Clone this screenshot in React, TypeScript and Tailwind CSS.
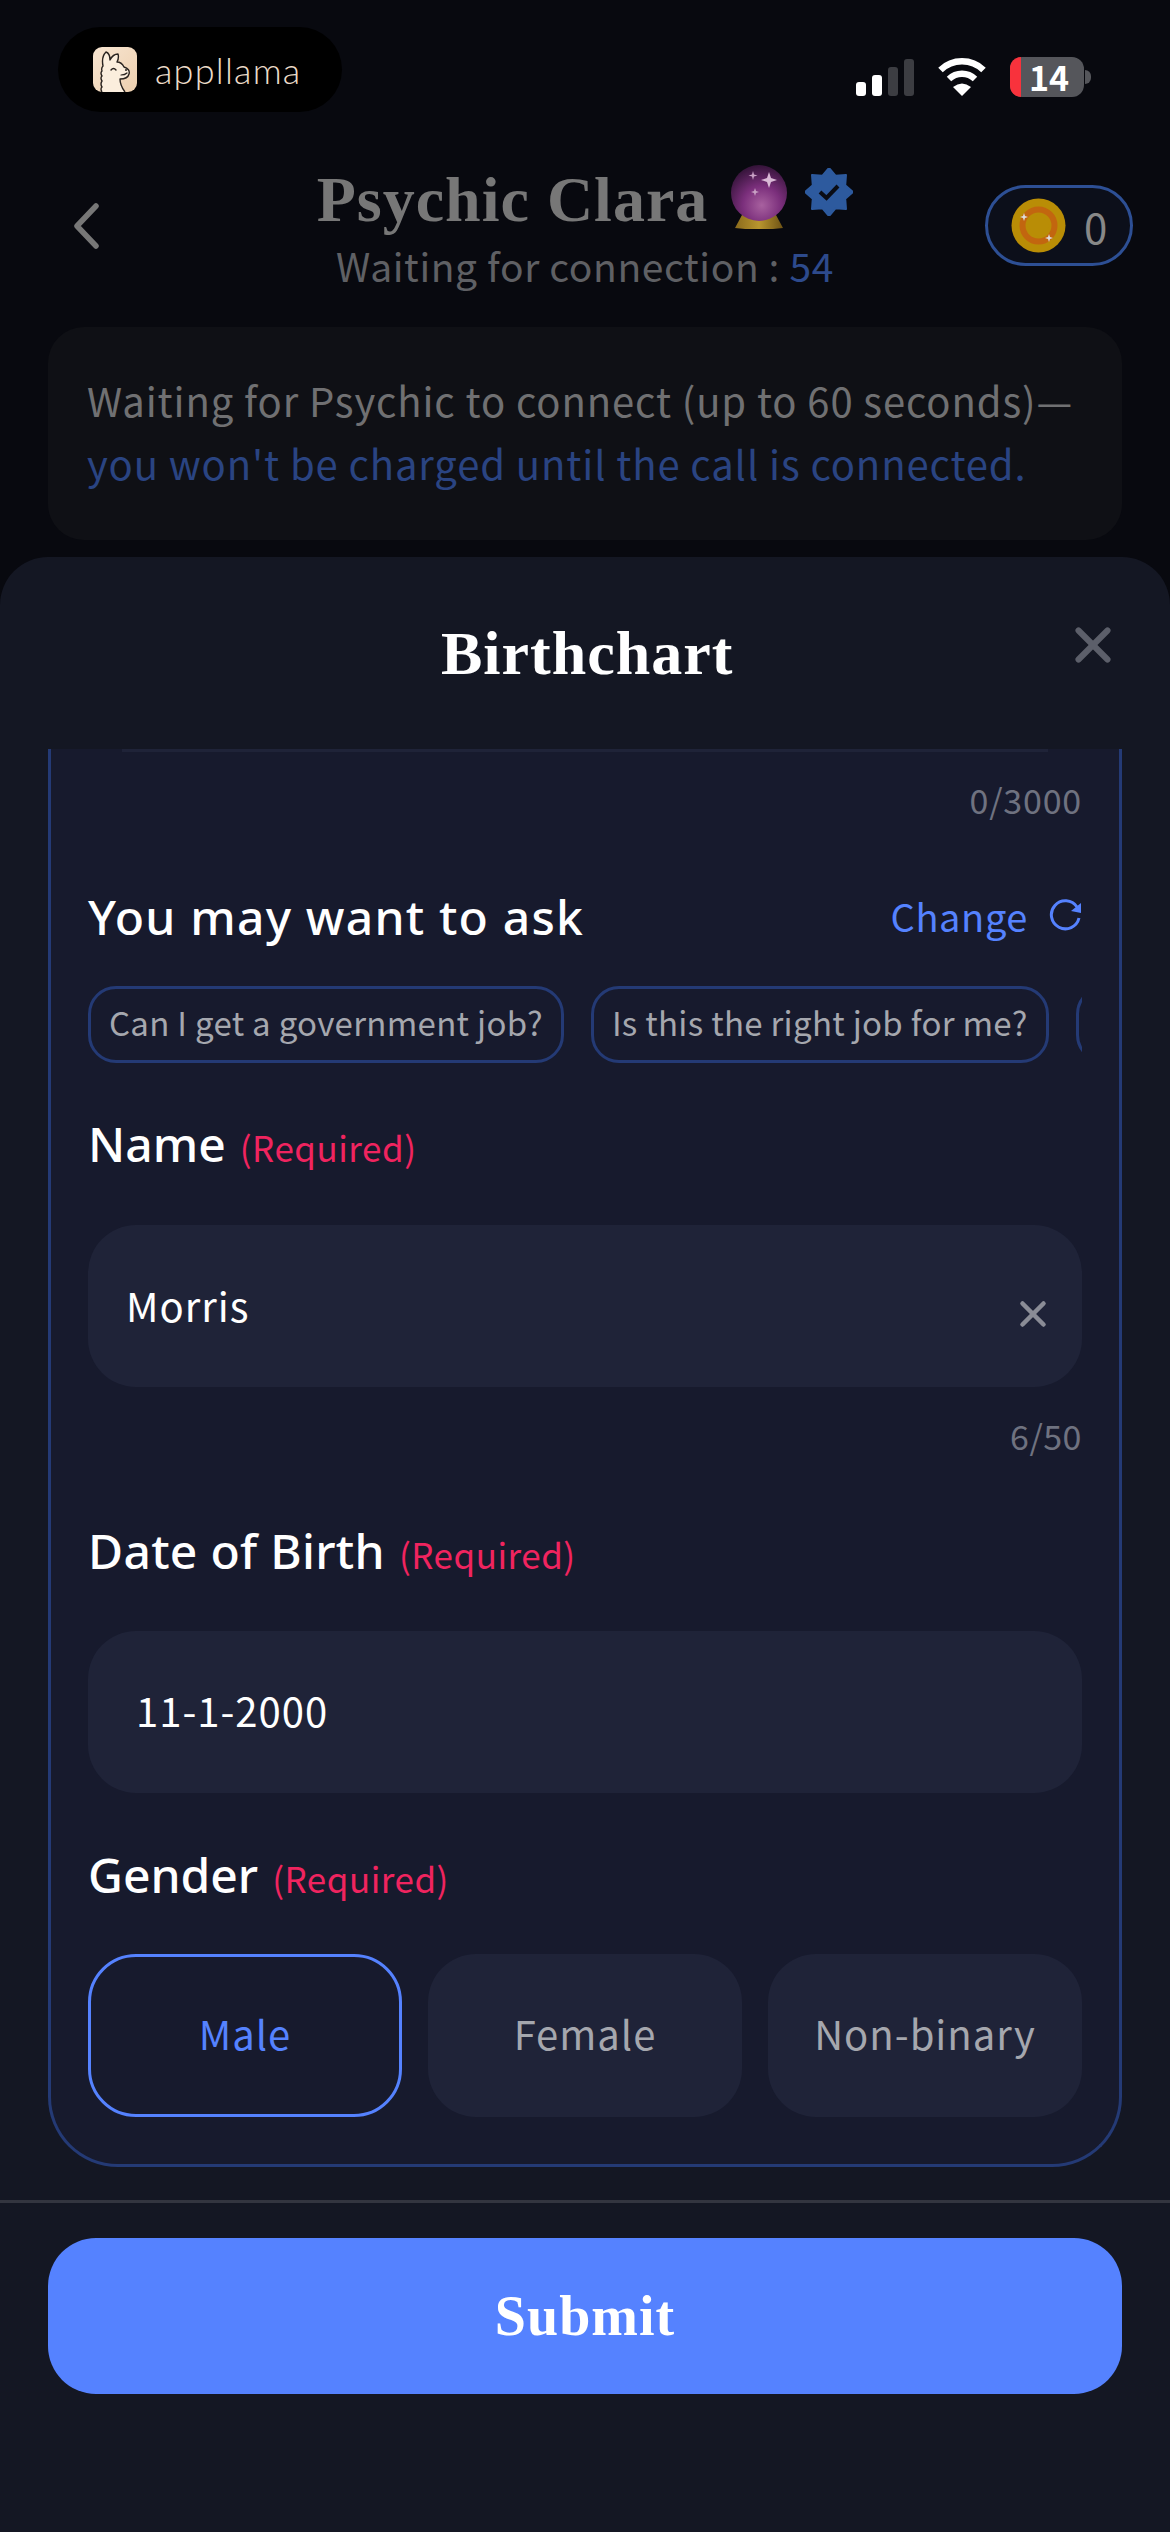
import { X } from "lucide-react";

const serif = "font-['Liberation_Serif',serif]";

function Required() {
  return <span className="text-[35px] tracking-[0.5px] text-[#f0245f]">(Required)</span>;
}

function LlamaIcon() {
  return (
    <svg width="44" height="45" viewBox="0 0 44 45">
      <defs>
        <linearGradient id="cream" x1="0" y1="0" x2="1" y2="1">
          <stop offset="0" stopColor="#f8e6d2" />
          <stop offset="1" stopColor="#edcfae" />
        </linearGradient>
      </defs>
      <rect width="44" height="45" rx="9" fill="url(#cream)" />
      <path
        d="M9 45 q-2 -3 0 -5 q-2 -3 0 -6 q-2 -3 0 -5 q-2 -3 0 -5 q-1 -3 1 -5 C9 14 10 8 13 5 C16 6 17 10 17 13 C19 9 22 7 25 7 C26 10 25 13 24 15 C28 15 30 18 31 20 C35 21 37 24 36 27 C35 31 31 32 27 32 C27 37 29 41 32 45"
        fill="#fbeedd"
        stroke="#2a2420"
        strokeWidth="1.4"
        strokeLinejoin="round"
      />
      <path d="M18 23 q2.5 -3 5 0" fill="none" stroke="#2a2420" strokeWidth="1.4" strokeLinecap="round" />
      <path d="M28 28 q4 0 6 -2" fill="none" stroke="#2a2420" strokeWidth="1.2" strokeLinecap="round" />
      <circle cx="33" cy="23" r="1" fill="#2a2420" />
    </svg>
  );
}

function Wifi() {
  return (
    <svg width="50" height="38" viewBox="0 0 50 38">
      <path d="M3.5 12 A31 31 0 0 1 46.5 12" fill="none" stroke="#fff" strokeWidth="6.5" />
      <path d="M12 21 A19 19 0 0 1 38 21" fill="none" stroke="#fff" strokeWidth="6.5" />
      <path d="M25 38 L16 29 Q25 22 34 29 Z" fill="#fff" />
    </svg>
  );
}

function CrystalBall() {
  return (
    <svg width="56" height="64" viewBox="0 0 56 64">
      <defs>
        <radialGradient id="ball" cx="0.55" cy="0.72" r="0.75">
          <stop offset="0" stopColor="#a8619f" />
          <stop offset="0.45" stopColor="#7b2f7c" />
          <stop offset="1" stopColor="#2e1133" />
        </radialGradient>
        <linearGradient id="base" x1="0" y1="0" x2="1" y2="0">
          <stop offset="0" stopColor="#8a6a1c" />
          <stop offset="0.5" stopColor="#b8962e" />
          <stop offset="1" stopColor="#6d5215" />
        </linearGradient>
      </defs>
      <path d="M11 50 L45 50 L52 63 Q28 66 4 63 Z" fill="url(#base)" />
      <circle cx="28" cy="28" r="28" fill="url(#ball)" />
      <path d="M38 7 l2 6 6 2 -6 2 -2 6 -2 -6 -6 -2 6 -2 Z" fill="#d9b9d6" />
      <path d="M22 6 l1 3.5 3.5 1 -3.5 1 -1 3.5 -1 -3.5 -3.5 -1 3.5 -1 Z" fill="#c8a0c4" />
      <path d="M24 23 l1 3 3 1 -3 1 -1 3 -1 -3 -3 -1 3 -1 Z" fill="#c8a0c4" />
    </svg>
  );
}

function VerifiedBadge() {
  const n = 8;
  const pts = Array.from({ length: n * 2 }, (_, i) => {
    const r = i % 2 === 0 ? 24 : 17.5;
    const a = (i * Math.PI) / n - Math.PI / 2;
    return `${(24 + r * Math.cos(a)).toFixed(1)},${(24 + r * Math.sin(a)).toFixed(1)}`;
  }).join(" ");
  return (
    <svg width="48" height="48" viewBox="0 0 48 48">
      <polygon points={pts} fill="#2d5a9e" stroke="#2d5a9e" strokeWidth="2" strokeLinejoin="round" />
      <path d="M15 24 L21.5 30 L33 18" fill="none" stroke="#0a0c14" strokeWidth="4" />
    </svg>
  );
}

function Coin() {
  return (
    <svg width="55" height="55" viewBox="0 0 55 55">
      <circle cx="27.5" cy="27.5" r="27" fill="#b98d06" />
      <circle cx="27.5" cy="27.5" r="16" fill="none" stroke="#c2660f" strokeWidth="6" />
      <rect x="19" y="19" width="17" height="17" rx="3" fill="#b98d06" transform="rotate(45 27.5 27.5)" />
      <path d="M13 15 l1 3 3 1 -3 1 -1 3 -1 -3 -3 -1 3 -1 Z" fill="#ddd" />
      <path d="M38 36 l1 3 3 1 -3 1 -1 3 -1 -3 -3 -1 3 -1 Z" fill="#ddd" />
    </svg>
  );
}

function Refresh() {
  return (
    <svg width="33" height="33" viewBox="0 0 33 33" fill="none">
      <path d="M28 8 A14 14 0 1 0 30 19" stroke="#5582ff" strokeWidth="3" />
      <path d="M32 4 L32 14 L22 12 Z" fill="#5582ff" />
    </svg>
  );
}

function GenderOption({ label, active }: { label: string; active?: boolean }) {
  return (
    <div
      className={
        active
          ? "flex h-[163px] items-center justify-center rounded-[48px] border-[3px] border-[#5582ff] pb-[5px] text-[40px] tracking-[1px] text-[#5582ff]"
          : "flex h-[163px] items-center justify-center rounded-[48px] bg-[#1f2338] pb-[5px] text-[40px] tracking-[1px] text-[#a5a7ae]"
      }
    >
      {label}
    </div>
  );
}

export default function App() {
  return (
    <div className="flex h-[2532px] w-[1170px] flex-col overflow-hidden bg-[#08090f] font-['Noto_Sans_CJK_SC','Noto_Sans',sans-serif]">
      {/* status bar */}
      <div className="flex items-start justify-between pl-[58px] pr-[79px] pt-[27px]">
        <div className="flex h-[85px] w-[284px] items-center gap-[18px] rounded-[43px] bg-black pl-[35px]">
          <LlamaIcon />
          <span className="font-['Lato',sans-serif] text-[36px] font-light leading-none tracking-[1.2px] text-[#ecdcc9]">
            appllama
          </span>
        </div>
        <div className="mt-[30px] flex items-center">
          <div className="flex items-end gap-[6px]">
            <div className="h-[14px] w-[10px] rounded-[3px] bg-white" />
            <div className="h-[21px] w-[10px] rounded-[3px] bg-white" />
            <div className="h-[29px] w-[10px] rounded-[3px] bg-[#3c3d42]" />
            <div className="h-[37px] w-[10px] rounded-[3px] bg-[#3c3d42]" />
          </div>
          <div className="ml-[23px]">
            <Wifi />
          </div>
          <div className="relative ml-[23px] flex h-[40px] w-[74px] items-center justify-center rounded-[12px] bg-[#55565b] pl-[4px] text-[34px] font-bold leading-[40px] text-white">
            <div className="absolute left-0 top-0 h-full w-[11px] rounded-l-[12px] bg-[#f8323c]" />
            14
          </div>
          <div className="ml-[1px] h-[14px] w-[6px] rounded-r-full bg-[#55565b]" />
        </div>
      </div>

      {/* call header */}
      <div className="mt-[48px] grid h-[130px] grid-cols-[1fr_auto_1fr] px-[37px]">
        <div className="flex items-center pt-[2px] pl-[36px]">
          <svg width="26" height="46" viewBox="0 0 26 46" fill="none">
            <path d="M23 3 L4 23 L23 43" stroke="#777" strokeWidth="5.5" strokeLinecap="round" strokeLinejoin="round" />
          </svg>
        </div>
        <div className="flex flex-col items-center">
          <div className="flex h-[80px] items-center gap-[23px]">
            <span className={`${serif} text-[64px] font-bold leading-none tracking-[1px] text-[#777]`}>Psychic Clara</span>
            <div className="-mt-[6px] flex items-center gap-[18px]">
              <CrystalBall />
              <div className="-mt-[10px]">
                <VerifiedBadge />
              </div>
            </div>
          </div>
          <div className="text-[39px] leading-[50px] tracking-[0.6px] text-[#5f6064]">
            Waiting for connection : <span className="text-[#2d4a8c]">54</span>
          </div>
        </div>
        <div className="flex items-center justify-end">
          <div className="flex h-[81px] w-[148px] items-center rounded-full border-[3px] border-[#2d4f94] bg-[#0c0f1a] pl-[23px]">
            <Coin />
            <span className="ml-[18px] text-[42px] text-[#888]">0</span>
          </div>
        </div>
      </div>

      {/* waiting notice */}
      <div className="mx-[48px] mt-[37px] flex h-[213px] flex-col justify-center rounded-[36px] bg-[#0f1015] pb-[3px] pl-[39px] text-[40px] leading-[63px] tracking-[0.9px]">
        <div className="whitespace-nowrap text-[#707072]">Waiting for Psychic to connect (up to 60 seconds)—</div>
        <div className="whitespace-nowrap text-[#2a4482]">you won't be charged until the call is connected.</div>
      </div>

      {/* birthchart sheet */}
      <div className="mt-[17px] flex flex-1 flex-col rounded-t-[48px] bg-[#141723]">
        <div className="flex h-[192px] shrink-0 items-start justify-between pl-[441px] pr-[48px]">
          <span className={`${serif} mt-[65px] text-[62px] font-bold leading-none tracking-[1px] text-white`}>Birthchart</span>
          <X className="mt-[59px] h-[58px] w-[58px] text-[#5c5f6a]" strokeWidth={2.5} />
        </div>

        <div className="mx-[48px] flex h-[1418px] flex-col rounded-b-[70px] border-x-[3px] border-b-[3px] border-[#243a75] bg-[#171a2d] px-[37px]">
          <div className="mx-[34px] h-[3px] shrink-0 bg-[#1f2338]" />
          <div className="mt-[28px] text-right text-[34px] leading-[40px] tracking-[0.8px] text-[#6f7280]">0/3000</div>

          <div className="mt-[65px] flex items-center justify-between">
            <span className="font-['Noto_Sans',sans-serif] text-[48px] font-medium leading-[64px] tracking-[1.2px] text-white">
              You may want to ask
            </span>
            <div className="mb-[3px] flex items-center gap-[21px] text-[38px] leading-[50px] tracking-[0.6px] text-[#5582ff]">
              Change <Refresh />
            </div>
          </div>

          <div className="mt-[37px] flex gap-[27px] overflow-hidden">
            <div className="flex h-[77px] shrink-0 items-center rounded-[28px] border-[3px] border-[#243a75] px-[18px] pb-[3px] text-[33px] tracking-[0.3px] text-[#a5a7ae]">
              Can I get a government job?
            </div>
            <div className="flex h-[77px] shrink-0 items-center rounded-[28px] border-[3px] border-[#243a75] px-[18px] pb-[3px] text-[33px] tracking-[0.3px] text-[#a5a7ae]">
              Is this the right job for me?
            </div>
            <div className="h-[77px] w-[100px] shrink-0 rounded-[28px] border-[3px] border-[#243a75]" />
          </div>

          <div className="mt-[49px] flex items-baseline gap-[14px]">
            <span className="font-['Noto_Sans',sans-serif] text-[48px] font-medium leading-[64px] text-white">Name</span>
            <Required />
          </div>
          <div className="mt-[49px] flex h-[162px] shrink-0 items-center justify-between rounded-[48px] bg-[#1f2338] pl-[38px] pr-[28px] text-[40px] tracking-[1px] text-white">
            <span className="pb-[2px]">Morris</span>
            <X className="mt-[16px] h-[42px] w-[42px] text-[#8a8c96]" strokeWidth={2.6} />
          </div>
          <div className="mt-[29px] text-right text-[34px] leading-[40px] tracking-[0.5px] text-[#6f7280]">6/50</div>

          <div className="mt-[63px] flex items-baseline gap-[14px]">
            <span className="font-['Noto_Sans',sans-serif] text-[48px] font-medium leading-[64px] tracking-[0.3px] text-white">Date of Birth</span>
            <Required />
          </div>
          <div className="mt-[48px] flex h-[162px] shrink-0 items-center rounded-[48px] bg-[#1f2338] pb-[5px] pl-[48px] text-[40px] tracking-[1px] text-white">
            11-1-2000
          </div>

          <div className="mt-[50px] flex items-baseline gap-[14px]">
            <span className="font-['Noto_Sans',sans-serif] text-[48px] font-medium leading-[64px] text-white">Gender</span>
            <Required />
          </div>
          <div className="mt-[47px] grid grid-cols-3 gap-[26px]">
            <GenderOption label="Male" active />
            <GenderOption label="Female" />
            <GenderOption label="Non-binary" />
          </div>
        </div>

        <div className="mt-[33px] h-[3px] shrink-0 bg-[#33353f]" />
        <div className="mx-[48px] mt-[35px] flex h-[156px] shrink-0 items-center justify-center rounded-[48px] bg-[#5582ff]">
          <span className={`${serif} text-[56px] font-bold tracking-[1px] text-white`}>Submit</span>
        </div>
      </div>
    </div>
  );
}
